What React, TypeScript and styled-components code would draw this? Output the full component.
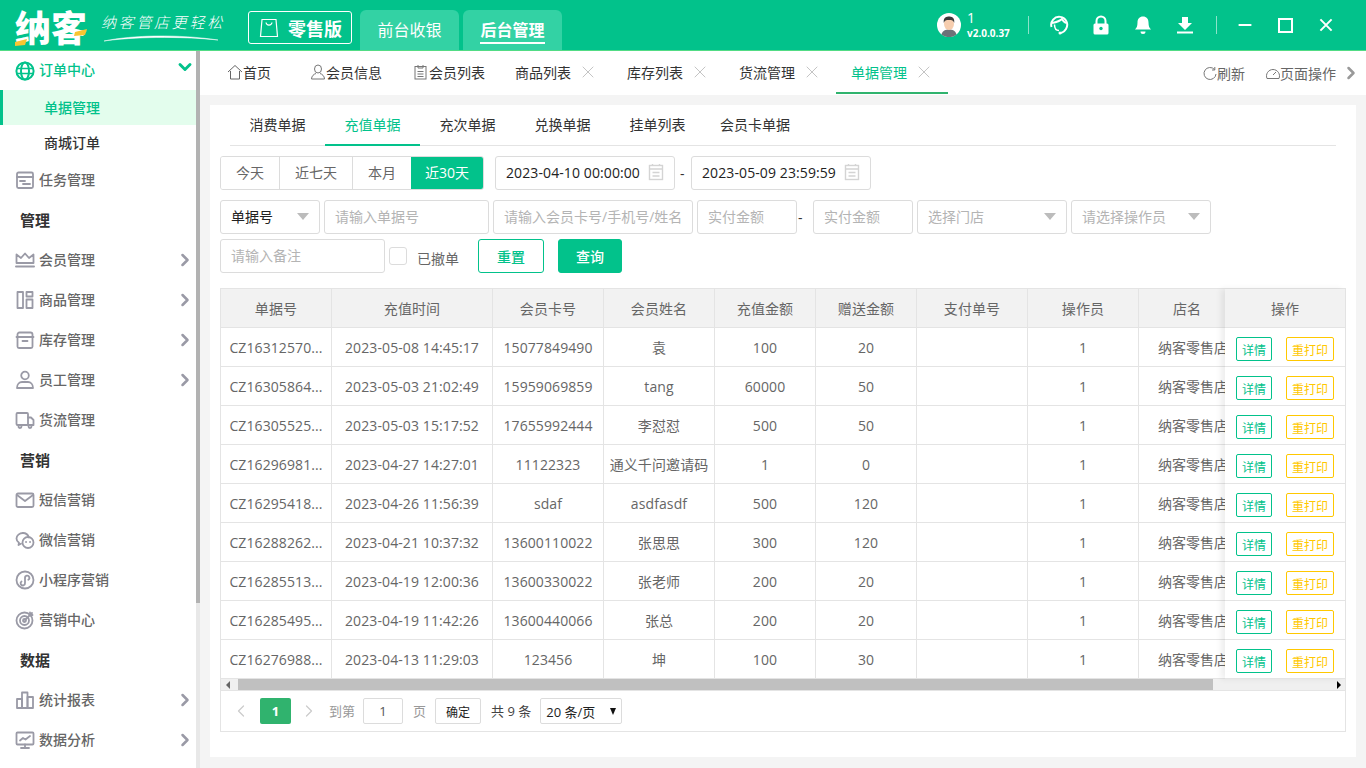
import React from "react";
import styled, { createGlobalStyle } from "styled-components";
import { ChevronRight, ChevronDown, ChevronLeft, X } from "lucide-react";

const Global = createGlobalStyle`
  html, body { margin: 0; padding: 0; width: 1366px; height: 768px; overflow: hidden; background: #f4f4f4; }
  * { box-sizing: border-box; }
  body { font-family: "Open Sans", "Noto Sans CJK SC", sans-serif; font-size: 14px; color: #666; }
`;

const GREEN = "#02c28b";

const Page = styled.div`width: 1366px; height: 768px; display: flex; flex-direction: column; overflow: hidden;`;

/* ---------- header ---------- */
const Header = styled.header`
  height: 51px; flex: none; display: flex; align-items: flex-end; background: ${GREEN};
  border-bottom: 1px solid #52dc85; color: #fff;
`;
const Logo = styled.div`position: relative; width: 86px; margin-left: 15px; height: 50px; display: flex; align-items: center; padding-top: 2px;`;
const LogoText = styled.span`font-size: 36px; font-weight: 900; line-height: 1; color: #fff; font-family: "Noto Sans CJK SC", sans-serif;`;
const LogoAccent = styled.svg`position: absolute; left: -1px; top: 26px; width: 74px; height: 20px;`;
const Slogan = styled.div`position: relative; width: 147px; height: 50px; display: flex; align-items: center; padding-bottom: 8px;`;
const SloganText = styled.span`font-size: 15px; font-style: italic; letter-spacing: 2.7px; color: #fff; font-family: "Noto Sans CJK SC", sans-serif; font-weight: 300;`;
const SloganLine = styled.svg`position: absolute; left: 2px; top: 33px; width: 116px; height: 10px;`;
const Edition = styled.div`
  width: 104px; height: 33px; margin-bottom: 6px; border: 1px solid #fff; border-radius: 3px;
  display: flex; align-items: center; gap: 9px; padding-left: 10px; font-size: 18px; font-weight: 700;
`;
const TopTab = styled.div<{ $active?: boolean }>`
  width: 99px; height: 40px; margin-left: ${p => (p.$active ? 4 : 8)}px; background: #33d2a4;
  border-radius: 6px 6px 0 0; display: flex; justify-content: center; padding-top: 8px;
  font-size: 16px; font-weight: ${p => (p.$active ? 700 : 400)};
`;
const TopTabLabel = styled.span<{ $active?: boolean }>`
  height: 26px; line-height: 24px; border-bottom: ${p => (p.$active ? "2px solid #fff" : "none")};
`;
const HeaderRight = styled.div`margin-left: auto; height: 50px; display: flex; align-items: center; padding-right: 32px;`;
const Avatar = styled.svg`width: 24px; height: 24px; margin-top: -1px;`;
const UserInfo = styled.div`display: flex; flex-direction: column; margin-left: 6px; width: 61px; margin-top: -1px;`;
const UserName = styled.span`font-size: 14px; line-height: 17px;`;
const Version = styled.span`font-size: 10px; font-weight: 700; line-height: 15px;`;
const VLine = styled.span<{ $ml?: number }>`width: 1px; height: 18px; margin-left: ${p => p.$ml ?? 0}px; background: rgba(255,255,255,.55);`;
const HeadIcon = styled.svg<{ $ml: number }>`width: 20px; height: 20px; margin-left: ${p => p.$ml}px; flex: none;`;
const WinIcon = styled.svg<{ $ml: number }>`width: 16px; height: 16px; margin-left: ${p => p.$ml}px; flex: none;`;
const Maxi = styled.span`width: 15px; height: 15px; border: 2px solid #fff; margin-left: 25px;`;

/* ---------- body ---------- */
const Body = styled.div`flex: 1; display: flex; min-height: 0;`;
const Sidebar = styled.aside`width: 196px; flex: none; background: #fff; display: flex; flex-direction: column;`;
const SideBar = styled.div`width: 4px; flex: none; background: #e8e8e8;`;
const SideThumb = styled.div`width: 100%; height: 552px; background: #b2b2b2;`;
const NavItem = styled.div<{ $h?: number; $active?: boolean }>`
  height: ${p => p.$h ?? 40}px; flex: none; display: flex; align-items: center; padding: 0 1px 0 15px;
  font-weight: 500; font-size: 14px; color: ${p => (p.$active ? GREEN : "#666")};
`;
const NavIcon = styled.svg`width: 20px; height: 20px; margin-right: 4px; flex: none;`;
const NavLabel = styled.span<{ $up?: number }>`flex: 1; padding-bottom: ${p => p.$up ?? 2}px;`;
const NavMore = styled(ChevronRight)`color: #9a9aa6; flex: none;`;
const NavOpen = styled(ChevronDown)`color: ${GREEN}; flex: none; margin-top: -7px;`;
const NavSection = styled.div`height: 40px; flex: none; display: flex; align-items: center; padding: 0 0 2px 20px; font-size: 15px; font-weight: 700; color: #333;`;
const SubItem = styled.div<{ $active?: boolean }>`
  height: 35px; flex: none; display: flex; align-items: center; padding: 0 0 2px ${p => (p.$active ? 41 : 44)}px;
  font-weight: 500; color: ${p => (p.$active ? GREEN : "#333")};
  background: ${p => (p.$active ? "#e3fded" : "transparent")};
  border-left: ${p => (p.$active ? `3px solid ${GREEN}` : "none")};
`;

const Main = styled.main`flex: 1; min-width: 0; display: flex; flex-direction: column; background: #f4f4f4;`;
const TabBar = styled.nav`height: 44px; flex: none; background: #fff; display: flex; align-items: stretch; padding-left: 12px; color: #333;`;
const Tab = styled.div<{ $active?: boolean; $ml?: number; $pr?: number }>`
  display: flex; align-items: center; padding: 0 ${p => p.$pr ?? 15}px 0 15px; margin-left: ${p => p.$ml ?? 0}px;
  border-bottom: 2px solid ${p => (p.$active ? "#30b36e" : "transparent")};
  margin-bottom: 1px; color: ${p => (p.$active ? GREEN : "#333")}; white-space: nowrap;
`;
const TabClose = styled(X)`margin-left: 7px; color: #c4c4c4; flex: none;`;
const TabIcon = styled.svg`width: 16px; height: 16px; flex: none;`;
const TabTools = styled.div`margin-left: auto; display: flex; align-items: center; color: #666; padding-right: 5px;`;
const ToolIcon = styled.svg`width: 14px; height: 14px; flex: none;`;
const ToolGap = styled.span`width: 21px;`;
const ToolEnd = styled(ChevronRight)`margin-left: 5px; color: #999; flex: none;`;

const Card = styled.section`
  margin: 10px; height: 652px; background: #fff; padding: 0 10px; display: flex; flex-direction: column;
`;
const SubTabs = styled.div`height: 41px; flex: none; margin: 0 10px; display: flex; border-bottom: 1px solid #e4e4e4; color: #333;`;
const SubTab = styled.div<{ $active?: boolean; $pad?: number }>`
  height: 41px; padding: 0 ${p => p.$pad ?? 19.5}px 1px; display: flex; align-items: center;
  color: ${p => (p.$active ? GREEN : "#333")};
  border-bottom: 2px solid ${p => (p.$active ? GREEN : "transparent")};
`;
const FilterRow = styled.div<{ $mt: number }>`display: flex; align-items: center; margin-top: ${p => p.$mt}px; height: 34px; flex: none;`;
const Segs = styled.div`display: flex; height: 34px; border: 1px solid #dcdcdc; border-radius: 3px; overflow: hidden;`;
const Seg = styled.div<{ $w: number; $active?: boolean }>`
  width: ${p => p.$w}px; display: flex; align-items: center; justify-content: center; padding-bottom: 2px;
  border-left: ${p => (p.$active ? "none" : "1px solid #dcdcdc")};
  &:first-child { border-left: none; }
  background: ${p => (p.$active ? GREEN : "#fff")}; color: ${p => (p.$active ? "#fff" : "#666")};
`;
const Field = styled.div<{ $w: number; $ml?: number; $dark?: boolean }>`
  width: ${p => p.$w}px; height: 34px; margin-left: ${p => p.$ml ?? 0}px; flex: none; display: flex; align-items: center;
  justify-content: space-between; border: 1px solid #dcdcdc; border-radius: 3px; padding: 0 10px 2px;
  color: ${p => (p.$dark ? "#222" : "#b4b4b4")}; white-space: nowrap; overflow: hidden;
`;
const DateText = styled.span`letter-spacing: .1px;`;
const Caret = styled.span`width: 0; height: 0; border-left: 6px solid transparent; border-right: 6px solid transparent; border-top: 7px solid #bcbcbc; flex: none;`;
const CalIcon = styled.svg`width: 16px; height: 18px; flex: none;`;
const Dash = styled.span<{ $w: number; $pl?: number }>`width: ${p => p.$w}px; flex: none; padding-left: ${p => p.$pl ?? 0}px; color: #333;`;
const Check = styled.span`width: 18px; height: 18px; margin-left: 4px; border: 1px solid #dcdcdc; border-radius: 3px; flex: none;`;
const CheckLabel = styled.span`margin-left: 10px; color: #666; padding-top: 4px;`;
const Btn = styled.div<{ $w: number; $ml: number; $solid?: boolean }>`
  width: ${p => p.$w}px; height: 34px; margin-left: ${p => p.$ml}px; display: flex; align-items: center; justify-content: center;
  border: 1px solid ${GREEN}; border-radius: 3px; font-weight: 500;
  background: ${p => (p.$solid ? GREEN : "#fff")}; color: ${p => (p.$solid ? "#fff" : GREEN)};
`;

const TableBox = styled.div`margin-top: 15px; width: 1126px; height: 444px; flex: none; border: 1px solid #e4e4e4; display: flex; flex-direction: column;`;
const TableTop = styled.div`display: flex; flex: none; height: 390px;`;
const TableLeft = styled.div`width: 1004px; flex: none; overflow: hidden;`;
const TableFixed = styled.div`width: 120px; flex: none; box-shadow: -4px 0 6px rgba(0,0,0,.07); background: #fff; position: relative;`;
const Row = styled.div<{ $head?: boolean }>`
  display: flex; height: 39px; width: 1100px; border-bottom: 1px solid #e4e4e4;
  background: ${p => (p.$head ? "#f2f2f2" : "#fff")};
`;
const Cell = styled.div<{ $w: number }>`
  width: ${p => p.$w}px; flex: none; display: flex; align-items: center; justify-content: center;
  border-right: 1px solid #e4e4e4; white-space: nowrap; overflow: hidden; color: #666; letter-spacing: .1px;
`;
const StoreCell = styled.div`width: 130px; flex: none; display: flex; align-items: center; padding-left: 19px; white-space: nowrap; color: #666;`;
const HeadStore = styled.div`width: 96px; flex: none; display: flex; align-items: center; justify-content: center; color: #666;`;
const FixedHead = styled.div`height: 39px; background: #f2f2f2; border-bottom: 1px solid #e4e4e4; display: flex; align-items: center; justify-content: center;`;
const FixedRow = styled.div`height: 39px; border-bottom: 1px solid #e4e4e4; display: flex; padding: 9px 0 0 11px; gap: 14px;`;
const RowBtn = styled.span<{ $w: number; $color: string }>`
  width: ${p => p.$w}px; height: 24px; padding-top: 1px; border: 1px solid ${p => p.$color}; color: ${p => p.$color}; border-radius: 2px;
  display: flex; align-items: center; justify-content: center; font-size: 12px; white-space: nowrap;
`;
const HScroll = styled.div`height: 12px; flex: none; background: #f0f0f0; display: flex; align-items: center; border-bottom: 1px solid #e4e4e4;`;
const ArrowL = styled.span`width: 0; height: 0; margin: 0 8px 0 5px; border-top: 4px solid transparent; border-bottom: 4px solid transparent; border-right: 4px solid #666;`;
const Thumb = styled.span`width: 975px; height: 11px; background: #c0c0c0;`;
const ArrowR = styled.span`width: 0; height: 0; margin-left: auto; margin-right: 4px; border-top: 4px solid transparent; border-bottom: 4px solid transparent; border-left: 4px solid #000;`;
const Pager = styled.div`flex: 1; display: flex; align-items: center; font-size: 13px; color: #999;`;
const PagerCur = styled.span`width: 31px; height: 26px; margin-left: 9px; border-radius: 2px; background: #30b36e; color: #fff; display: flex; align-items: center; justify-content: center; font-weight: 700;`;
const PagerArrow = styled.span<{ $ml: number }>`display: flex; margin-left: ${p => p.$ml}px; color: #ccc;`;
const PagerText = styled.span<{ $ml: number; $dark?: boolean }>`margin-left: ${p => p.$ml}px; padding-bottom: 2px; color: ${p => (p.$dark ? "#444" : "#999")}; white-space: nowrap;`;
const PagerBox = styled.span<{ $w: number; $ml: number; $dark?: boolean; $small?: boolean }>`
  width: ${p => p.$w}px; height: 26px; margin-left: ${p => p.$ml}px; border: 1px solid #dcdcdc; border-radius: 2px;
  padding-top: ${p => (p.$small ? 1 : 0)}px;
  display: flex; align-items: center; justify-content: center; gap: 15px; color: ${p => (p.$dark ? "#222" : "#555")}; white-space: nowrap;
  font-size: ${p => (p.$small ? 12 : 13)}px;
`;
const MiniCaret = styled.span`width: 0; height: 0; border-left: 3.5px solid transparent; border-right: 3.5px solid transparent; border-top: 7px solid #111;`;

/* ---------- data ---------- */
const cols = [111, 161, 111, 111, 101, 101, 111, 111];
const heads = ["单据号", "充值时间", "会员卡号", "会员姓名", "充值金额", "赠送金额", "支付单号", "操作员"];
const rows = [
  ["CZ16312570...", "2023-05-08 14:45:17", "15077849490", "袁", "100", "20", "", "1"],
  ["CZ16305864...", "2023-05-03 21:02:49", "15959069859", "tang", "60000", "50", "", "1"],
  ["CZ16305525...", "2023-05-03 15:17:52", "17655992444", "李怼怼", "500", "50", "", "1"],
  ["CZ16296981...", "2023-04-27 14:27:01", "11122323", "通义千问邀请码", "1", "0", "", "1"],
  ["CZ16295418...", "2023-04-26 11:56:39", "sdaf", "asdfasdf", "500", "120", "", "1"],
  ["CZ16288262...", "2023-04-21 10:37:32", "13600110022", "张思思", "300", "120", "", "1"],
  ["CZ16285513...", "2023-04-19 12:00:36", "13600330022", "张老师", "200", "20", "", "1"],
  ["CZ16285495...", "2023-04-19 11:42:26", "13600440066", "张总", "200", "20", "", "1"],
  ["CZ16276988...", "2023-04-13 11:29:03", "123456", "坤", "100", "30", "", "1"],
];

/* ---------- icons ---------- */
const g = { fill: "none", stroke: "#9a9aa6", strokeWidth: 1.8, strokeLinecap: "round" as const, strokeLinejoin: "round" as const };
const I: Record<string, React.ReactNode> = {
  globe: <g fill="none" stroke={GREEN} strokeWidth="2"><circle cx="10" cy="10" r="8.6" /><ellipse cx="10" cy="10" rx="4" ry="8.6" /><path d="M1.5 7.5h17M1.5 12.5h17" strokeWidth="1.6" /></g>,
  task: <g {...g}><rect x="2" y="2.5" width="16" height="15.5" rx="1.5" /><path d="M2 7h16M5 11h5M8 14h7" /></g>,
  crown: <g {...g}><path d="M1.5 13V4.5L6 8l4-4.5L14 8l4.5-3.5V13z" /><path d="M1 16.5h18" strokeWidth="2" /></g>,
  goods: <g {...g}><rect x="2.5" y="2" width="5.5" height="16" /><rect x="11.5" y="2" width="6" height="4.5" /><rect x="11.5" y="9.5" width="6" height="8.5" /></g>,
  stock: <g {...g}><path d="M2.5 7V4.500A2 2 0 0 1 4.500 2.500h11a2 2 0 0 1 2 2V7" /><path d="M1.500 7h17" /><path d="M2.500 7v9.500a1.500 1.500 0 0 0 1.500 1.500h12a1.500 1.500 0 0 0 1.500-1.500V7M7.500 11h5" /></g>,
  staff: <g {...g}><circle cx="10" cy="5.500" r="3.800" /><path d="M2 18c0-4 2.500-6 5-6h6c2.500 0 5 2 5 6z" /></g>,
  truck: <g {...g}><rect x="1.500" y="3" width="11.500" height="12" rx="1" /><path d="M13 7.500h3l2.500 2.500v5H13" /><circle cx="5" cy="16.500" r="1.500" /><circle cx="15" cy="16.500" r="1.500" /></g>,
  mail: <g {...g}><rect x="1.500" y="3.500" width="17" height="13.500" rx="1.500" /><path d="M2 5l8 6 8-6" /></g>,
  wechat: <g {...g}><path d="M8 3C4.500 3 1.500 5.500 1.500 8.500c0 1.800 1 3.300 2.500 4.300L3.500 15l2.500-1.300" /><path d="M14 7.500c-1-2.700-3.500-4.500-6-4.500" /><circle cx="13" cy="12.500" r="5.500" /><path d="M11 12h.1M15 12h.1" strokeWidth="1.800" /></g>,
  mini: <g {...g}><circle cx="10" cy="10" r="8.500" /><path d="M6.500 11.500a2.200 2.200 0 1 0 3.500 1.500V8a2.200 2.200 0 1 1 3.300 1.800" /></g>,
  target: <g {...g}><circle cx="9.500" cy="10.500" r="8" /><circle cx="9.500" cy="10.500" r="4.500" /><circle cx="9.500" cy="10.500" r="1.500" /><path d="M10 10L17 3M15 2.500v2.500h2.500" /></g>,
  chart: <g {...g}><rect x="2" y="9" width="5" height="9" /><rect x="7" y="2.500" width="5.500" height="15.500" /><rect x="12.500" y="7" width="5.500" height="11" /></g>,
  screen: <g {...g}><rect x="1.500" y="2.500" width="17" height="12" rx="1" /><path d="M5 10.500l3-2.500 2.500 1.500L15 6M10 14.500v3M6 18h8" /></g>,
};
const Nav = ({ icon, label, more }: { icon: string; label: string; more?: boolean }) => (
  <NavItem>
    <NavIcon viewBox="0 0 20 20">{I[icon]}</NavIcon>
    <NavLabel>{label}</NavLabel>
    {more && <NavMore size={20} strokeWidth={3} />}
  </NavItem>
);
const Cal = () => (
  <CalIcon viewBox="0 0 16 18"><g fill="none" stroke="#d4d4d4" strokeWidth="1.400"><rect x="1.500" y="2.500" width="13" height="14" /><path d="M1.500 6h13M4.500 1v2M11.500 1v2M4.500 9.500h7M4.500 13h7" /></g></CalIcon>
);

export default function App() {
  return (
    <Page>
      <Global />
      <Header>
        <Logo>
          <LogoText>纳客</LogoText>
          <LogoAccent viewBox="0 0 74 20"><path d="M1 16l12-3-2 6-10 1zM61 6l12-3-2 6-11 1z" fill="#f7c531" /></LogoAccent>
        </Logo>
        <Slogan>
          <SloganText>纳客管店更轻松</SloganText>
          <SloganLine viewBox="0 0 116 10"><path d="M1 8C30 2 75 1 115 7C75 3 30 4 1 8z" fill="#fff" stroke="#fff" strokeWidth=".5" /></SloganLine>
        </Slogan>
        <Edition>
          <svg width="20" height="20" viewBox="0 0 20 20"><path d="M3 1.500h14l1.500 17h-17zM7 4.500c.5 3.500 5.500 3.500 6 0" fill="none" stroke="#fff" strokeWidth="1.200" /></svg>
          零售版
        </Edition>
        <TopTab><TopTabLabel>前台收银</TopTabLabel></TopTab>
        <TopTab $active><TopTabLabel $active>后台管理</TopTabLabel></TopTab>
        <HeaderRight>
          <Avatar viewBox="0 0 24 24">
            <circle cx="12" cy="12" r="12" fill="#fff" />
            <path d="M4.500 21.500c1-4 4-5 7.500-5s6.500 1 7.500 5A12 12 0 0 1 4.500 21.500z" fill="#6d7278" />
            <ellipse cx="12" cy="11" rx="5" ry="6" fill="#f6cdae" />
            <path d="M6.800 10C6 4 10 3.500 12 3.500s6 .5 5.200 6.500C16.500 7.500 15 7 12 7s-4.500.5-5.200 3z" fill="#3a3a3a" />
          </Avatar>
          <UserInfo><UserName>1</UserName><Version>v2.0.0.37</Version></UserInfo>
          <VLine />
          <HeadIcon $ml={20} viewBox="0 0 20 20">
            <g fill="none" stroke="#fff" strokeWidth="2"><path d="M2.500 12A8 8 0 1 1 17 14c-1 1.800-3 3.500-5 4" /><path d="M3 8c5-1 8-2 10-4 1 2 2 3 4 4" /></g>
            <circle cx="11" cy="18" r="1.500" fill="#fff" />
            <path d="M5.500 9.500c0 4 2 6 4.500 6" fill="none" stroke="#fff" strokeWidth="1.500" />
          </HeadIcon>
          <HeadIcon $ml={22} viewBox="0 0 20 20">
            <path d="M5.500 9V6a4.500 4.500 0 0 1 9 0v3" fill="none" stroke="#fff" strokeWidth="2" />
            <rect x="2.500" y="8.500" width="15" height="11" rx="1.500" fill="#fff" />
            <circle cx="10" cy="13.500" r="1.700" fill={GREEN} />
          </HeadIcon>
          <HeadIcon $ml={22} viewBox="0 0 20 20">
            <path d="M10 1.500c-3.500 0-5.500 2.500-5.500 6 0 4-1 5.500-2.500 7h16c-1.500-1.500-2.500-3-2.500-7 0-3.500-2-6-5.500-6z" fill="#fff" />
            <path d="M7.500 16.500h5a2.500 2.500 0 0 1-5 0z" fill="#fff" />
          </HeadIcon>
          <HeadIcon $ml={22} viewBox="0 0 20 20">
            <path d="M7 2h6v6h4l-7 7-7-7h4z" fill="#fff" /><rect x="2" y="16.500" width="16" height="2" fill="#fff" />
          </HeadIcon>
          <VLine $ml={21} />
          <WinIcon $ml={20} viewBox="0 0 20 20"><path d="M2 10h16" stroke="#fff" strokeWidth="2.500" /></WinIcon>
          <Maxi />
          <WinIcon $ml={25} viewBox="0 0 20 20"><path d="M3 3l14 14M17 3L3 17" stroke="#fff" strokeWidth="2.500" /></WinIcon>
        </HeaderRight>
      </Header>
      <Body>
        <Sidebar>
          <NavItem $h={39} $active>
            <NavIcon viewBox="0 0 20 20">{I.globe}</NavIcon>
            <NavLabel $up={4}>订单中心</NavLabel>
            <NavOpen size={20} strokeWidth={3.500} />
          </NavItem>
          <SubItem $active>单据管理</SubItem>
          <SubItem>商城订单</SubItem>
          <Nav icon="task" label="任务管理" />
          <NavSection>管理</NavSection>
          <Nav icon="crown" label="会员管理" more />
          <Nav icon="goods" label="商品管理" more />
          <Nav icon="stock" label="库存管理" more />
          <Nav icon="staff" label="员工管理" more />
          <Nav icon="truck" label="货流管理" />
          <NavSection>营销</NavSection>
          <Nav icon="mail" label="短信营销" />
          <Nav icon="wechat" label="微信营销" />
          <Nav icon="mini" label="小程序营销" />
          <Nav icon="target" label="营销中心" />
          <NavSection>数据</NavSection>
          <Nav icon="chart" label="统计报表" more />
          <Nav icon="screen" label="数据分析" more />
        </Sidebar>
        <SideBar><SideThumb /></SideBar>
        <Main>
          <TabBar>
            <Tab>
              <TabIcon viewBox="0 0 16 16"><path d="M1 8l7-6.500L15 8M3.500 7v8h9V7" fill="none" stroke="#666" strokeWidth="1" /></TabIcon>
              首页
            </Tab>
            <Tab $ml={9}>
              <TabIcon viewBox="0 0 16 16"><g fill="none" stroke="#777" strokeWidth="1"><ellipse cx="8" cy="5" rx="3.500" ry="4" /><path d="M1.500 15c0-3 2.500-5 4.500-5.500M14.500 15c0-3-2.500-5-4.500-5.500M1.500 15h13" /></g></TabIcon>
              会员信息
            </Tab>
            <Tab $ml={1}>
              <TabIcon viewBox="0 0 16 16"><g fill="none" stroke="#777" strokeWidth="1"><rect x="2" y="2.500" width="11" height="12.500" /><path d="M5 1v3h5V1M4.500 7.500h6M4.500 10h6M4.500 12.500h6" /></g></TabIcon>
              会员列表
            </Tab>
            {["商品列表", "库存列表", "货流管理"].map(t => (
              <Tab key={t} $pr={14}>
                {t}
                <TabClose size={20} strokeWidth={1.2} />
              </Tab>
            ))}
            <Tab $active $pr={14}>
              单据管理
              <TabClose size={20} strokeWidth={1.2} />
            </Tab>
            <TabTools>
              <ToolIcon viewBox="0 0 14 14"><path d="M11.500 3.500A6 6 0 1 0 13 8M11.800 1v3H9" fill="none" stroke="#777" strokeWidth="1" /></ToolIcon>
              刷新
              <ToolGap />
              <ToolIcon viewBox="0 0 14 14"><path d="M1 12.500A6.500 6.500 0 1 1 13 12.500zM7 9l3-3" fill="none" stroke="#777" strokeWidth="1" /></ToolIcon>
              页面操作
              <ToolEnd size={20} strokeWidth={3} />
            </TabTools>
          </TabBar>
          <Card>
            <SubTabs>
              <SubTab>消费单据</SubTab>
              <SubTab $active>充值单据</SubTab>
              <SubTab>充次单据</SubTab>
              <SubTab>兑换单据</SubTab>
              <SubTab>挂单列表</SubTab>
              <SubTab $pad={15}>会员卡单据</SubTab>
            </SubTabs>
            <FilterRow $mt={10}>
              <Segs>
                <Seg $w={58}>今天</Seg>
                <Seg $w={73}>近七天</Seg>
                <Seg $w={59}>本月</Seg>
                <Seg $w={72} $active>近30天</Seg>
              </Segs>
              <Field $w={180} $ml={11} $dark><DateText>2023-04-10 00:00:00</DateText><Cal /></Field>
              <Dash $w={16} $pl={5}>-</Dash>
              <Field $w={180} $dark><DateText>2023-05-09 23:59:59</DateText><Cal /></Field>
            </FilterRow>
            <FilterRow $mt={10}>
              <Field $w={100} $dark>单据号<Caret /></Field>
              <Field $w={165} $ml={4}>请输入单据号</Field>
              <Field $w={200} $ml={4}>请输入会员卡号/手机号/姓名</Field>
              <Field $w={100} $ml={4}>实付金额</Field>
              <Dash $w={16} $pl={1}>-</Dash>
              <Field $w={100}>实付金额</Field>
              <Field $w={150} $ml={4}>选择门店<Caret /></Field>
              <Field $w={140} $ml={4}>请选择操作员<Caret /></Field>
            </FilterRow>
            <FilterRow $mt={5}>
              <Field $w={165}>请输入备注</Field>
              <Check />
              <CheckLabel>已撤单</CheckLabel>
              <Btn $w={66} $ml={19}>重置</Btn>
              <Btn $w={64} $ml={14} $solid>查询</Btn>
            </FilterRow>
            <TableBox>
              <TableTop>
                <TableLeft>
                  <Row $head>
                    {heads.map((h, i) => <Cell key={h} $w={cols[i]}>{h}</Cell>)}
                    <HeadStore>店名</HeadStore>
                  </Row>
                  {rows.map(r => (
                    <Row key={r[0]}>
                      {r.map((c, i) => <Cell key={i} $w={cols[i]}>{c}</Cell>)}
                      <StoreCell>纳客零售店铺</StoreCell>
                    </Row>
                  ))}
                </TableLeft>
                <TableFixed>
                  <FixedHead>操作</FixedHead>
                  {rows.map(r => (
                    <FixedRow key={r[0]}>
                      <RowBtn $w={36} $color={GREEN}>详情</RowBtn>
                      <RowBtn $w={48} $color="#ffc800">重打印</RowBtn>
                    </FixedRow>
                  ))}
                </TableFixed>
              </TableTop>
              <HScroll><ArrowL /><Thumb /><ArrowR /></HScroll>
              <Pager>
                <PagerArrow $ml={10}><ChevronLeft size={20} strokeWidth={1.500} /></PagerArrow>
                <PagerCur>1</PagerCur>
                <PagerArrow $ml={8}><ChevronRight size={20} strokeWidth={1.500} /></PagerArrow>
                <PagerText $ml={10}>到第</PagerText>
                <PagerBox $w={40} $ml={8}>1</PagerBox>
                <PagerText $ml={10}>页</PagerText>
                <PagerBox $w={46} $ml={9} $dark $small>确定</PagerBox>
                <PagerText $ml={10} $dark>共 9 条</PagerText>
                <PagerBox $w={82} $ml={9} $dark>20 条/页<MiniCaret /></PagerBox>
              </Pager>
            </TableBox>
          </Card>
        </Main>
      </Body>
    </Page>
  );
}
